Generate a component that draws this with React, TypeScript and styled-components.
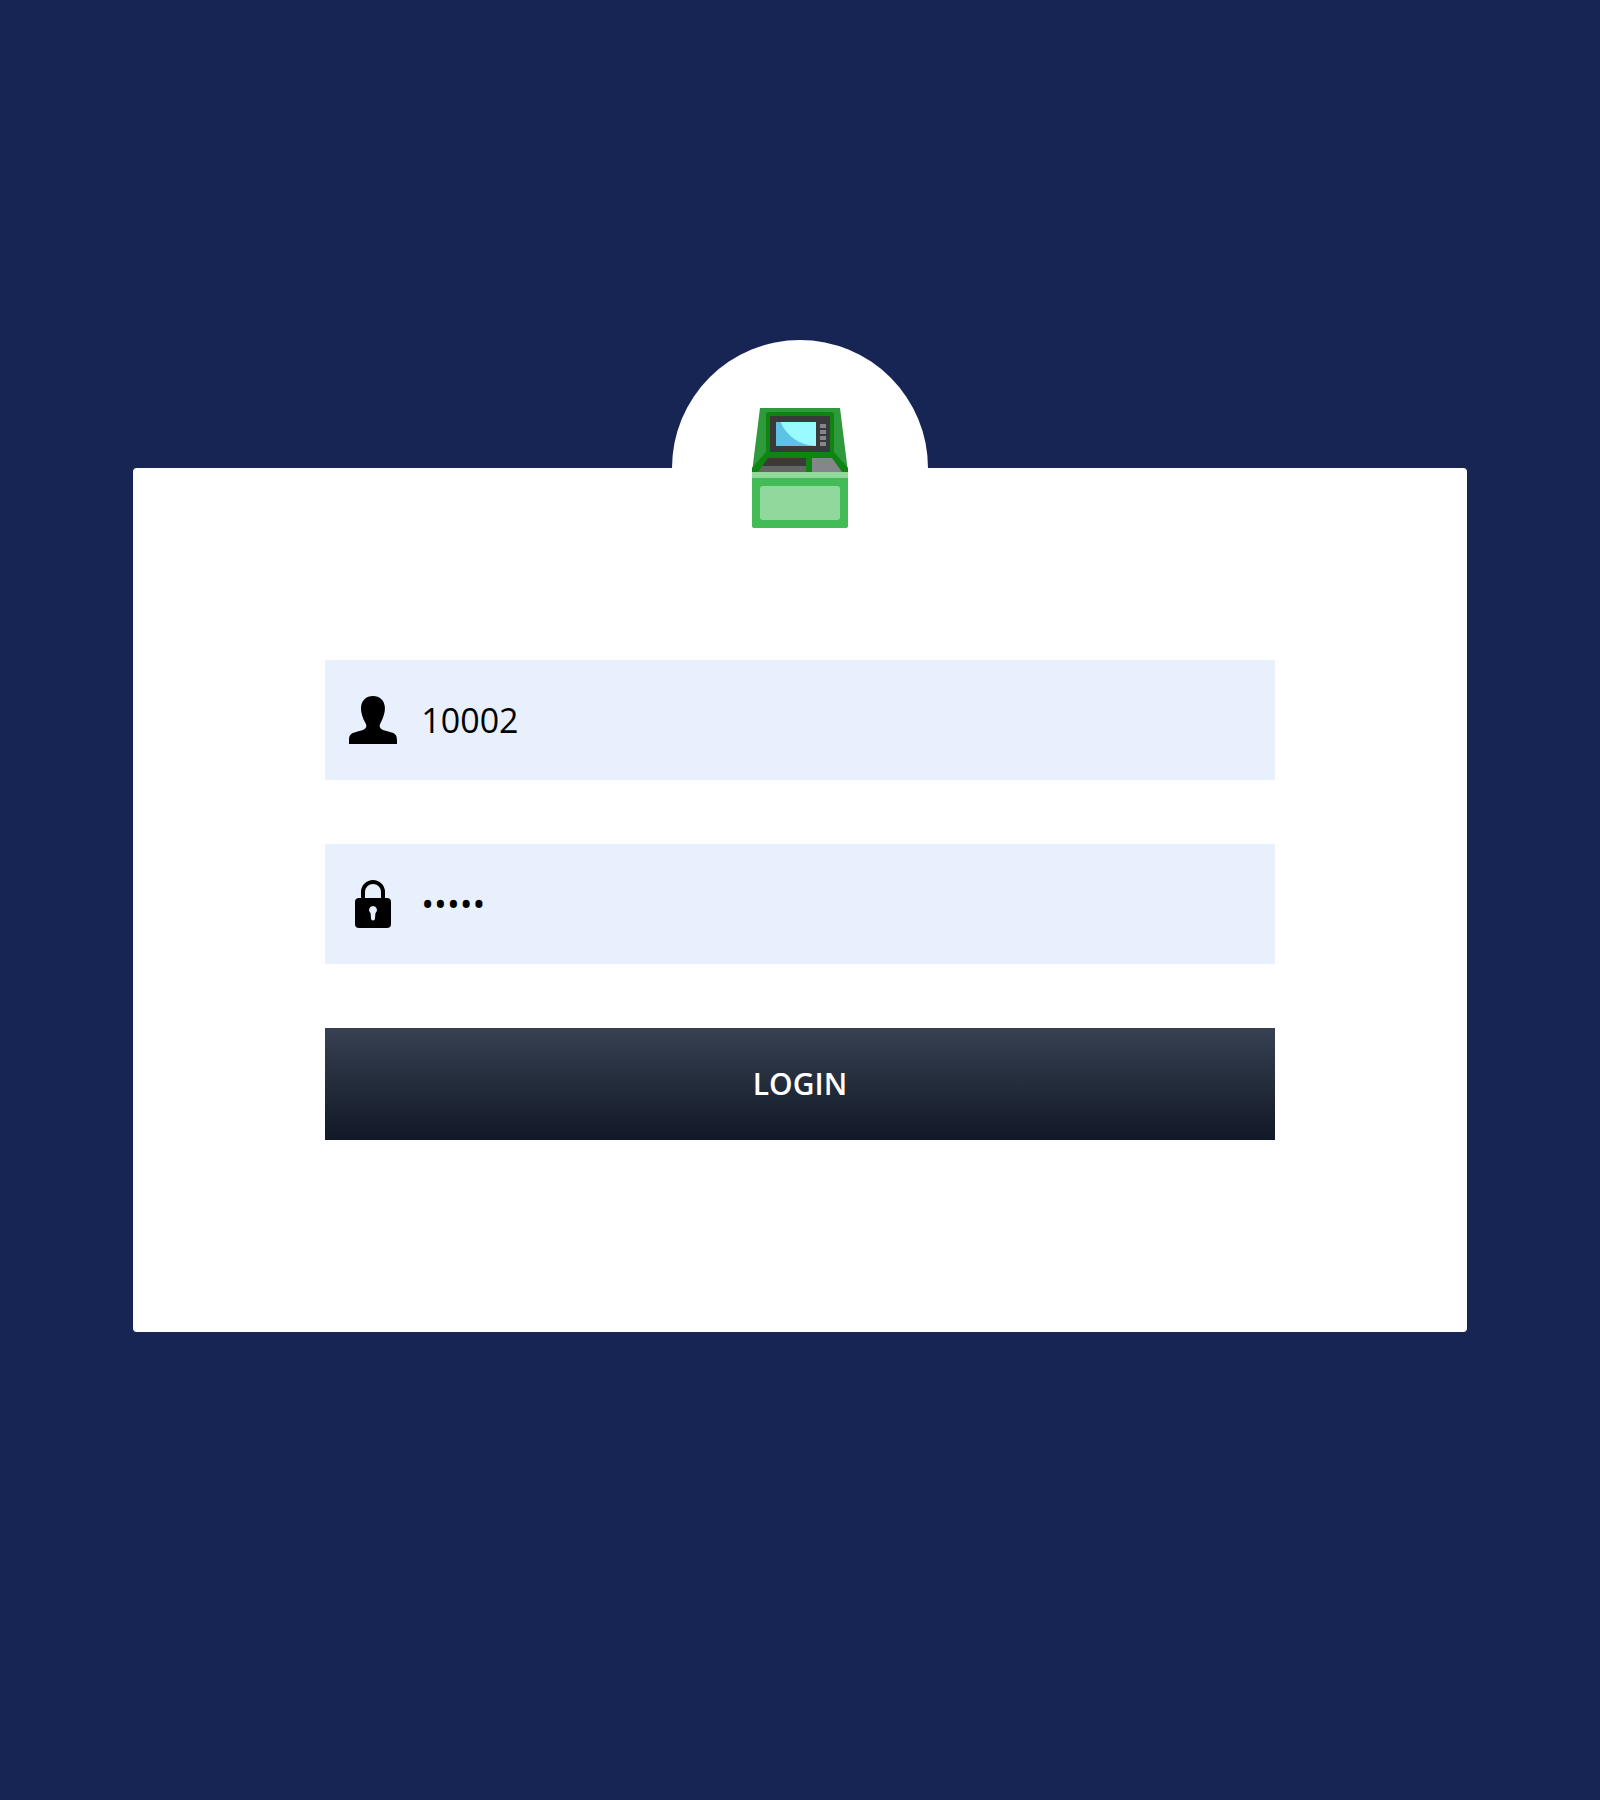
import React, { useState } from "react";
import styled, { createGlobalStyle } from "styled-components";

const GlobalStyle = createGlobalStyle`
  *, *::before, *::after { box-sizing: border-box; }
  body { margin: 0; background: #172554; }
`;

const Page = styled.main`
  min-height: 100vh;
  display: flex;
  align-items: center;
  justify-content: center;
  background: #172554;
  font-family: "Segoe UI", "Open Sans", "Noto Sans", sans-serif;
`;

const Card = styled.section`
  position: relative;
  width: calc(100% * 10 / 12);
  padding: 192px;
  border-radius: 4px;
  background: #ffffff;
`;

const Badge = styled.div`
  position: absolute;
  top: 0;
  left: 50%;
  width: 256px;
  height: 256px;
  display: flex;
  align-items: center;
  justify-content: center;
  border-radius: 50%;
  background: #ffffff;
  transform: translate(-50%, -50%);
`;

const Form = styled.form`
  display: flex;
  flex-direction: column;
  gap: 64px;
`;

const Field = styled.label`
  display: flex;
  align-items: center;
  gap: 24px;
  height: 120px;
  padding: 0 24px;
  background: #e8f0fe;
  color: #000000;
`;

const FieldIcon = styled.svg`
  flex: none;
  width: 48px;
  height: 48px;
  fill: currentColor;
`;

const Input = styled.input`
  flex: 1;
  min-width: 0;
  height: 100%;
  padding: 0;
  border: 0;
  outline: 0;
  background: transparent;
  color: inherit;
  font-family: inherit;
  font-size: 34px;
  line-height: 48px;
`;

const LoginButton = styled.button`
  height: 112px;
  border: 0;
  background: linear-gradient(to bottom, #374151, #111827);
  color: #ffffff;
  font-family: inherit;
  font-size: 30px;
  font-weight: 600;
  line-height: 48px;
  cursor: pointer;
`;

const AtmIcon = () => (
  <svg width="96" height="120" viewBox="0 0 48 60" aria-hidden="true">
    <path fill="#2e9a3c" d="M4 0h40l4 32H0z" />
    <path fill="#0f8410" d="M8.500 2h31q1.500 0 1.500 1.500V22l7 8v2H0v-2l7-8V3.500Q7 2 8.500 2z" />
    <path fill="#3a3a3a" d="M9 4h30v18H9z" />
    <path fill="#99fbff" d="M12 7h20v12H12z" />
    <path fill="#5dc3e6" d="M12 7h2.300C17 13.500 23 18.500 32 19H12z" />
    <path fill="#85868c" d="M34 8h3v2h-3zM34 11h3v2h-3zM34 14h3v2h-3zM34 17h3v2h-3zM30 25h10l5 7H30z" />
    <path fill="#3a3a3a" d="M8 25h19v4H5.200z" />
    <path fill="#656565" d="M5.200 29H27v3H3z" />
    <path fill="#43bc57" d="M0 32h48v27q0 1-1 1H1q-1 0-1-1z" />
    <path fill="#90d89c" d="M0 32h48v3H0z" />
    <rect x="4" y="39" width="40" height="17" rx="1.500" fill="#90d89c" />
  </svg>
);

const UserIcon = () => (
  <FieldIcon viewBox="0 0 24 24" aria-hidden="true">
    <path d="M20.822 18.096c-3.439-.794-6.640-1.490-5.090-4.418 4.720-8.912 1.251-13.678-3.732-13.678-5.082 0-8.464 4.949-3.732 13.678 1.597 2.945-1.725 3.641-5.090 4.418-3.073.710-3.188 2.236-3.178 4.904l.004 1h23.990l.004-.969c.012-2.688-.092-4.222-3.176-4.935z" />
  </FieldIcon>
);

const LockIcon = () => (
  <FieldIcon viewBox="0 0 24 24" aria-hidden="true">
    <path
      fillRule="evenodd"
      d="M6 9V6a6 6 0 0 1 12 0v3h1a2 2 0 0 1 2 2v11a2 2 0 0 1-2 2H5a2 2 0 0 1-2-2V11a2 2 0 0 1 2-2zM8 9h8V6a4 4 0 0 0-8 0zM12 13a2 2 0 0 0-1.200 3.600L11 19.200a1 1 0 0 0 2 0l.200-2.600A2 2 0 0 0 12 13z"
    />
  </FieldIcon>
);

export default function App() {
  const [account, setAccount] = useState("10002");
  const [pin, setPin] = useState("10002");

  return (
    <>
      <GlobalStyle />
      <Page>
        <Card>
          <Badge>
            <AtmIcon />
          </Badge>
          <Form onSubmit={(event) => event.preventDefault()}>
            <Field>
              <UserIcon />
              <Input
                type="text"
                aria-label="Account number"
                value={account}
                onChange={(event) => setAccount(event.target.value)}
              />
            </Field>
            <Field>
              <LockIcon />
              <Input
                type="password"
                aria-label="PIN"
                value={pin}
                onChange={(event) => setPin(event.target.value)}
              />
            </Field>
            <LoginButton type="submit">LOGIN</LoginButton>
          </Form>
        </Card>
      </Page>
    </>
  );
}
